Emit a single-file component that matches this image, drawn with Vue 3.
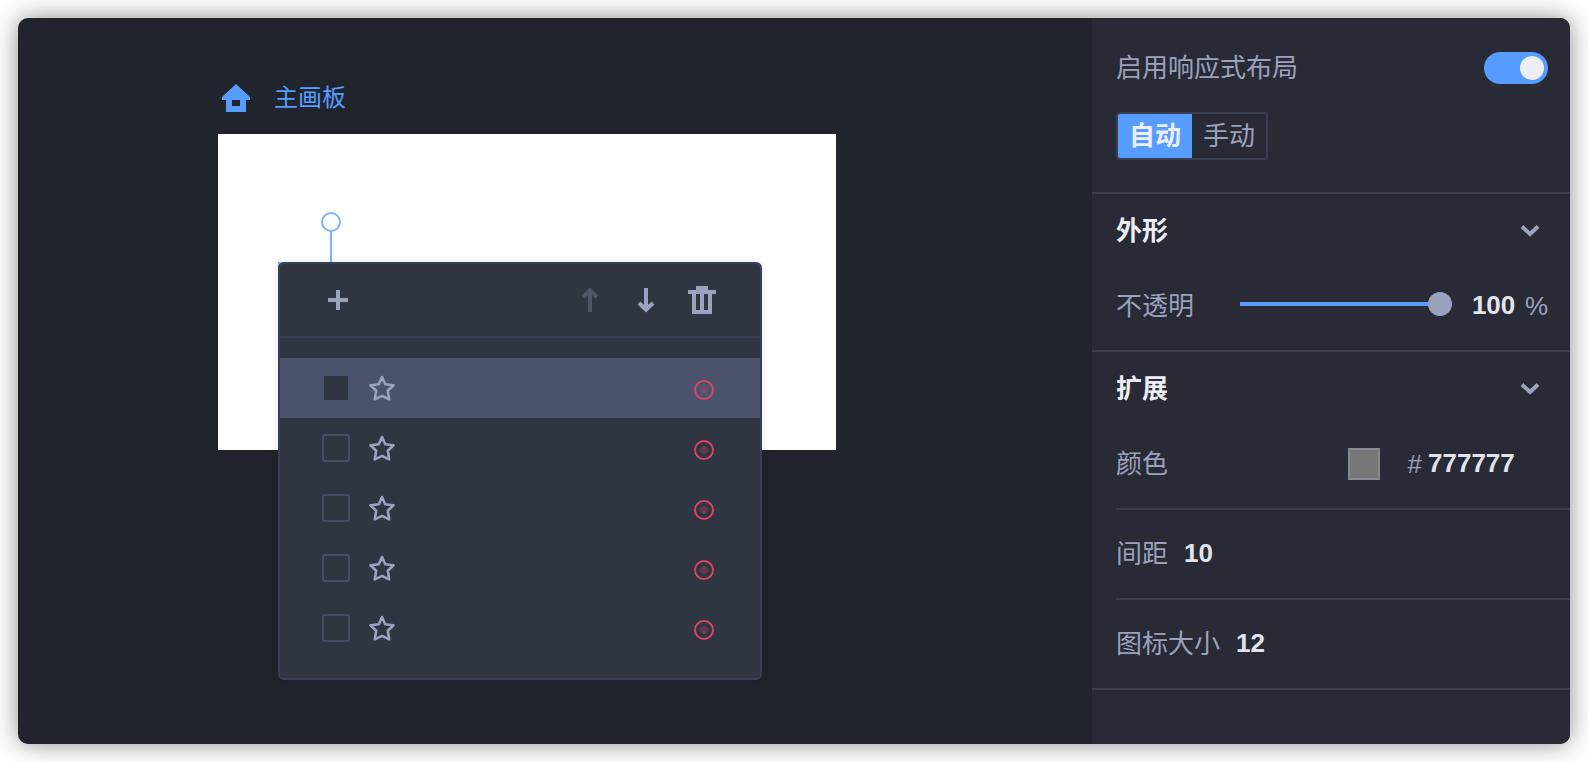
<script setup>
import { ref } from 'vue'

const rows = ref([
  { id: 1, checked: true },
  { id: 2, checked: false },
  { id: 3, checked: false },
  { id: 4, checked: false },
  { id: 5, checked: false },
])
const responsive = ref(true)
const mode = ref('auto')
const opacity = ref(100)
const color = ref('777777')
const spacing = ref('10')
const iconSize = ref('12')
</script>

<template>
  <div class="window">
    <main class="stage">
      <div class="board-title">
        <svg class="home" viewBox="0 0 28 28" aria-hidden="true">
          <path fill-rule="evenodd" d="M14 0 28 13V16H24V28H4V16H0V13ZM10 16V22H18V16Z" />
        </svg>
        <span>主画板</span>
      </div>
      <div class="board">
        <div class="selection">
          <span class="rotate-line"></span>
          <span class="rotate-knob"></span>
        </div>
        <section class="popover">
          <header class="toolbar">
            <button type="button" class="tool" aria-label="添加">
              <svg viewBox="0 0 28 28"><path d="M14 4V24M4 14H24" /></svg>
            </button>
            <div class="tools">
              <button type="button" class="tool" aria-label="上移" disabled>
                <svg viewBox="0 0 28 28"><path d="M14 26V4M7 11 14 4.200 21 11" /></svg>
              </button>
              <button type="button" class="tool" aria-label="下移">
                <svg viewBox="0 0 28 28"><path d="M14 2V24M7 17 14 23.800 21 17" /></svg>
              </button>
              <button type="button" class="tool" aria-label="删除">
                <svg viewBox="0 0 28 28">
                  <path class="solid" fill-rule="evenodd" d="M8 0H20V4H28V8H24V28H4V8H0V4H8ZM8 8V24H12V8ZM16 8V24H20V8Z" />
                </svg>
              </button>
            </div>
          </header>
          <ul class="rows">
            <li v-for="row in rows" :key="row.id" class="row" :class="{ active: row.checked }">
              <input v-model="row.checked" type="checkbox" class="check" :aria-label="'图标 ' + row.id" />
              <svg class="star" viewBox="0 0 28 28" aria-hidden="true">
                <path d="M14 3 17.200 10.200 25.500 11.200 19.800 16.800 21.200 25.400 14 21.900 6.800 25.400 8.200 16.800 2.500 11.200 10.800 10.200Z" />
              </svg>
              <button type="button" class="target" aria-label="移除">
                <svg viewBox="0 0 20 20">
                  <circle cx="10" cy="10" r="9" class="ring" />
                  <circle cx="10" cy="10" r="4" class="dot" />
                </svg>
              </button>
            </li>
          </ul>
        </section>
      </div>
    </main>

    <aside class="panel">
      <section class="layout">
        <label class="line">
          <span>启用响应式布局</span>
          <input v-model="responsive" type="checkbox" role="switch" class="switch" />
        </label>
        <div class="segmented">
          <button type="button" :class="{ on: mode === 'auto' }" @click="mode = 'auto'">自动</button>
          <button type="button" :class="{ on: mode === 'manual' }" @click="mode = 'manual'">手动</button>
        </div>
      </section>

      <section class="group">
        <button type="button" class="heading">
          <span>外形</span>
          <svg viewBox="0 0 20 12" aria-hidden="true"><path d="M2 1.500 10 9 18 1.500" /></svg>
        </button>
        <div class="field">
          <label for="opacity">不透明</label>
          <input id="opacity" v-model="opacity" type="range" min="0" max="100" class="slider" />
          <input v-model="opacity" type="text" class="value three" aria-label="不透明度" />
          <span class="unit">%</span>
        </div>
      </section>

      <section class="group open">
        <button type="button" class="heading">
          <span>扩展</span>
          <svg viewBox="0 0 20 12" aria-hidden="true"><path d="M2 1.500 10 9 18 1.500" /></svg>
        </button>
        <div class="field">
          <label for="color">颜色</label>
          <button type="button" class="swatch" aria-label="选择颜色"></button>
          <span class="hash">#</span>
          <input id="color" v-model="color" type="text" class="value hex" />
        </div>
      </section>
      <div class="plain inset">
        <label for="spacing">间距</label>
        <input id="spacing" v-model="spacing" type="text" class="value" />
      </div>
      <div class="plain">
        <label for="size">图标大小</label>
        <input id="size" v-model="iconSize" type="text" class="value" />
      </div>
    </aside>
  </div>
</template>

<style>
body {
  margin: 0;
  background: #fff;
}
</style>

<style scoped>
* {
  box-sizing: border-box;
}

.window {
  display: flex;
  min-height: calc(100vh - 36px);
  margin: 18px;
  border-radius: 10px;
  background: #20242c;
  box-shadow: 0 0 24px rgba(0, 0, 0, 0.45);
  color: #9aa2bd;
  font: 26px/36px "Liberation Sans", "Noto Sans CJK SC", sans-serif;
}

button,
input {
  margin: 0;
  padding: 0;
  border: 0;
  background: none;
  color: inherit;
  font: inherit;
}

button {
  cursor: pointer;
}

svg {
  display: block;
}

.stage {
  flex: 1;
  min-width: 0;
  padding: 62px 40px 0 200px;
}

.board-title {
  display: flex;
  align-items: center;
  gap: 24px;
  height: 36px;
  padding-left: 4px;
  color: #579dff;
  font-size: 24px;
}

.home {
  width: 28px;
  height: 28px;
  fill: #579dff;
}

.board {
  position: relative;
  width: 618px;
  height: 316px;
  margin-top: 18px;
  background: #fff;
}

.selection {
  position: absolute;
  top: 128px;
  left: 60px;
  width: 106px;
  height: 14px;
  border: 2px solid #7db2ff;
}

.rotate-line {
  position: absolute;
  bottom: 100%;
  left: 50px;
  width: 2px;
  height: 34px;
  background: #7db2ff;
}

.rotate-knob {
  position: absolute;
  top: -52px;
  left: 41px;
  width: 20px;
  height: 20px;
  border: 2px solid #7db2ff;
  border-radius: 50%;
  background: #fff;
}

.popover {
  position: absolute;
  top: 128px;
  left: 60px;
  width: 484px;
  border: 2px solid #394156;
  border-radius: 6px;
  background: #303542;
  box-shadow: 0 0 8px rgba(0, 0, 0, 0.1);
}

.toolbar {
  display: flex;
  align-items: center;
  justify-content: space-between;
  height: 74px;
  padding: 0 44px;
  border-bottom: 2px solid #394156;
}

.tools {
  display: flex;
  gap: 28px;
}

.tool {
  width: 28px;
  height: 28px;
}

.tool path {
  fill: none;
  stroke: #9aa2bd;
  stroke-width: 4;
}

.tool .solid {
  fill: #9aa2bd;
  stroke: none;
}

.tool:disabled {
  opacity: 0.3;
}

.rows {
  margin: 0;
  padding: 20px 0;
  list-style: none;
}

.row {
  display: flex;
  align-items: center;
  height: 60px;
  padding: 0 46px 0 42px;
}

.row.active {
  background: #4a536b;
}

.check {
  width: 28px;
  height: 28px;
  border: 2px solid #454e67;
  border-radius: 3px;
  appearance: none;
}

.check:checked {
  border-color: transparent;
  background: #303542;
  background-clip: padding-box;
}

.star {
  width: 28px;
  height: 28px;
  margin-left: 18px;
  fill: none;
  stroke: #9aa2bd;
  stroke-linejoin: round;
  stroke-width: 2.600;
}

.target {
  width: 20px;
  height: 20px;
  margin-top: 4px;
  margin-left: auto;
}

.ring {
  fill: none;
  stroke: #dc4464;
  stroke-width: 2;
}

.dot {
  fill: #dc4464;
  opacity: 0.3;
}

.panel {
  flex: none;
  width: 478px;
  border-radius: 0 10px 10px 0;
  background: #282a36;
}

.layout {
  padding: 34px 22px 32px 24px;
  border-bottom: 2px solid #363e50;
}

.line {
  display: flex;
  align-items: center;
  justify-content: space-between;
  height: 32px;
}

.switch {
  display: flex;
  align-items: center;
  justify-content: flex-end;
  width: 64px;
  height: 32px;
  padding: 4px;
  border-radius: 16px;
  background: #4a536b;
  appearance: none;
}

.switch:checked {
  background: #579dff;
}

.switch::before {
  width: 24px;
  height: 24px;
  border-radius: 50%;
  background: #eceef4;
  content: "";
}

.segmented {
  display: inline-flex;
  height: 48px;
  margin-top: 28px;
  overflow: hidden;
  border: 2px solid #363e50;
  border-radius: 4px;
  vertical-align: top;
}

.segmented button {
  width: 74px;
}

.segmented .on {
  background: #579dff;
  color: #eceef4;
  font-weight: 700;
}

.group {
  padding-bottom: 6px;
  border-bottom: 2px solid #363e50;
}

.group.open {
  border-bottom: 0;
}

.heading {
  display: flex;
  align-items: center;
  justify-content: space-between;
  width: 100%;
  height: 74px;
  padding: 0 30px 0 24px;
  color: #eceef4;
  font-weight: 700;
}

.heading svg {
  width: 20px;
  height: 12px;
  fill: none;
  stroke: #9aa2bd;
  stroke-width: 4;
}

.field {
  display: flex;
  align-items: center;
  height: 76px;
  padding: 0 22px 0 24px;
}

.value {
  width: 60px;
  height: 36px;
  padding-bottom: 2px;
  color: #e2e4ea;
  font-weight: 700;
}

.three {
  width: 44px;
  margin-left: 20px;
}

.unit {
  margin-left: 9px;
}

.slider {
  flex: 1;
  min-width: 0;
  height: 24px;
  margin-bottom: 4px;
  margin-left: 46px;
  background: linear-gradient(#579dff, #579dff) center / 100% 4px no-repeat;
  appearance: none;
}

.slider::-webkit-slider-thumb {
  width: 24px;
  height: 24px;
  border-radius: 50%;
  background: #9aa2bd;
  appearance: none;
}

.swatch {
  width: 32px;
  height: 32px;
  margin-left: auto;
  border: 2px solid #868896;
  background: #777;
}

.hash {
  margin-left: 28px;
}

.hex {
  width: 120px;
  margin-left: 6px;
}

.plain {
  display: flex;
  align-items: center;
  gap: 16px;
  height: 90px;
  padding-left: 24px;
  border-bottom: 2px solid #363e50;
}

.plain.inset {
  height: 92px;
  margin-left: 24px;
  padding-left: 0;
  border-top: 2px solid #363e50;
}
</style>
